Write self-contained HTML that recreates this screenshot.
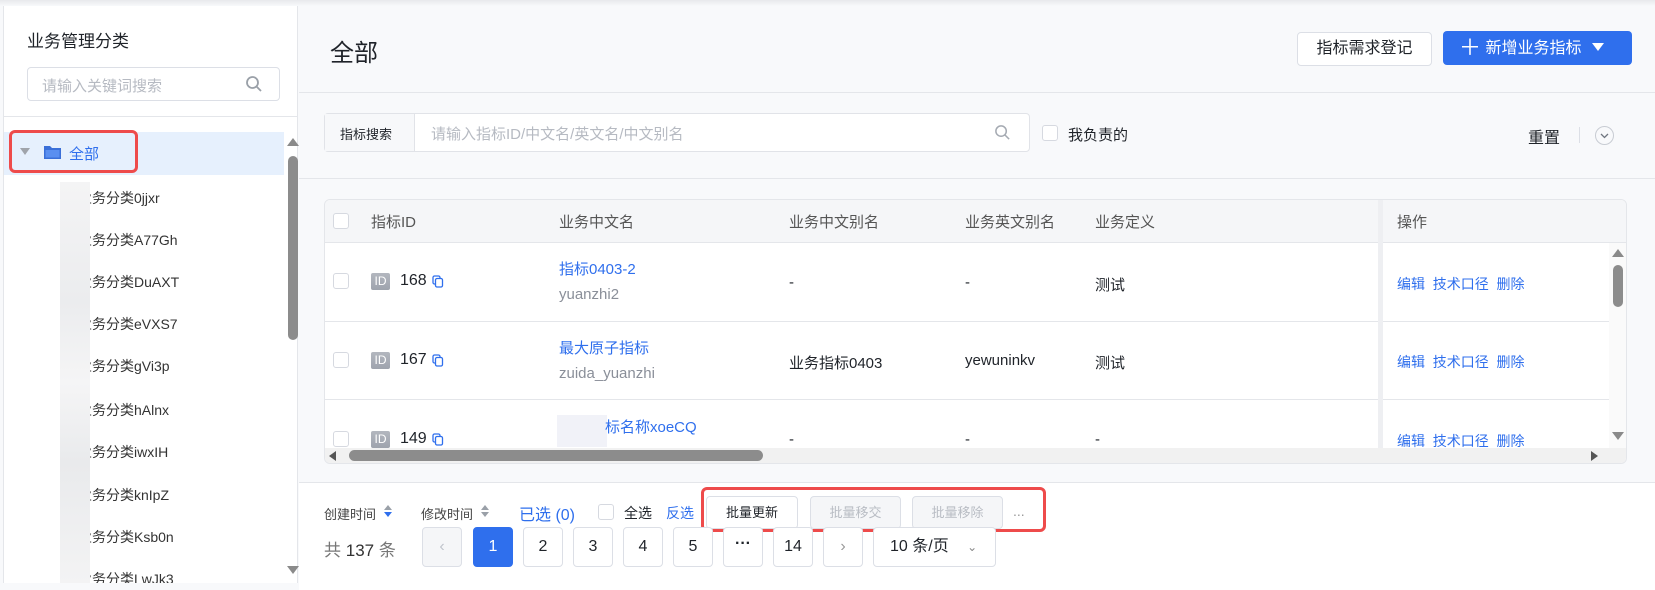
<!DOCTYPE html>
<html><head><meta charset="utf-8">
<style>
*{box-sizing:border-box;margin:0;padding:0}
body{width:1655px;height:590px;overflow:hidden;background:#f8f9fb;font-family:"Liberation Sans","Noto Sans CJK SC",sans-serif;font-size:14px;color:#1f2329;position:relative}
.a{position:absolute;white-space:nowrap}
.blue{color:#2f6fed}
.gray{color:#8a8f99}
.cb{position:absolute;width:16px;height:16px;border:1px solid #d6d9e0;border-radius:3px;background:#fff}
.pg{position:absolute;top:527px;width:40px;height:40px;border:1px solid #dcdfe6;border-radius:4px;background:#fff;text-align:center;line-height:38px;font-size:16px}
.btn{position:absolute;top:496px;height:33px;border:1px solid #dcdfe6;border-radius:4px;text-align:center;line-height:31px;font-size:14px}
.idb{position:absolute;width:19px;height:17px;border-radius:2px;background:linear-gradient(#b3b7bf,#9ea3ad);color:#fff;font-size:12px;line-height:17px;text-align:center}
.blur{position:absolute;left:60px;width:30px;height:22px;background:#eeeff1}
</style></head><body>
<div class="a" style="left:0;top:0;width:1655px;height:6px;background:linear-gradient(#e8e9ec,#f8f9fb)"></div>
<!-- left panel -->
<div class="a" style="left:3px;top:6px;width:295px;height:577px;background:#fff;border-left:1px solid #e4e6ea;border-right:1px solid #e4e6ea"></div>
<div class="a" style="left:27px;top:27px;font-size:17px">业务管理分类</div>
<div class="a" style="left:27px;top:67px;width:253px;height:34px;border:1px solid #dcdfe6;border-radius:4px"></div>
<div class="a" style="left:42px;top:75px;font-size:15px;color:#b6bac2">请输入关键词搜索</div>
<svg class="a" style="left:245px;top:75px" width="18" height="18" viewBox="0 0 18 18"><circle cx="7.5" cy="7.5" r="5.5" fill="none" stroke="#9aa0a8" stroke-width="1.8"/><path d="M11.5 11.5L16 16" stroke="#9aa0a8" stroke-width="1.8"/></svg>
<div class="a" style="left:4px;top:116px;width:293px;height:1px;background:#e4e6ea"></div>
<div class="a" style="left:4px;top:132px;width:280px;height:43px;background:#e6f0fd"></div>
<div class="a" style="left:9px;top:130px;width:129px;height:43px;border:3px solid #ee4b4b;border-radius:6px"></div>
<div class="a" style="left:20px;top:148px;width:0;height:0;border-left:5px solid transparent;border-right:5px solid transparent;border-top:7px solid #a0a4ab"></div>
<svg class="a" style="left:44px;top:145px" width="17" height="14" viewBox="0 0 17 14"><path d="M0 1h6l2 2h9v11H0z" fill="#3a6fd8"/><rect x="1.5" y="5" width="14" height="7.5" fill="#5a8ff0"/></svg>
<div class="a blue" style="left:69px;top:143px;font-size:15px">全部</div>
<div class="a" style="left:78px;top:188px;color:#333">业务分类0jjxr</div>
<div class="a" style="left:78px;top:230px;color:#333">业务分类A77Gh</div>
<div class="a" style="left:78px;top:272px;color:#333">业务分类DuAXT</div>
<div class="a" style="left:78px;top:314px;color:#333">业务分类eVXS7</div>
<div class="a" style="left:78px;top:356px;color:#333">业务分类gVi3p</div>
<div class="a" style="left:78px;top:400px;color:#333">业务分类hAlnx</div>
<div class="a" style="left:78px;top:442px;color:#333">业务分类iwxIH</div>
<div class="a" style="left:78px;top:485px;color:#333">业务分类knIpZ</div>
<div class="a" style="left:78px;top:527px;color:#333">业务分类Ksb0n</div>
<div class="a" style="left:78px;top:569px;color:#333;height:14px;overflow:hidden">业务分类LwJk3</div>
<div class="a" style="left:60px;top:182px;width:30px;height:401px;background:linear-gradient(#f4f4f5,#ebecee 30%,#f5f5f6 50%,#e9eaec 70%,#f3f3f4)"></div>
<div class="a" style="left:287px;top:138px;width:0;height:0;border-left:6px solid transparent;border-right:6px solid transparent;border-bottom:8px solid #8a8a8a"></div>
<div class="a" style="left:288px;top:156px;width:10px;height:184px;border-radius:5px;background:#8c8c8c"></div>
<div class="a" style="left:287px;top:566px;width:0;height:0;border-left:6px solid transparent;border-right:6px solid transparent;border-top:8px solid #8a8a8a"></div>
<!-- header -->
<div class="a" style="left:330px;top:33px;font-size:24px">全部</div>
<div class="a" style="left:1297px;top:32px;width:135px;height:34px;background:#fff;border:1px solid #dcdfe6;border-radius:4px;text-align:center;line-height:32px;font-size:16px">指标需求登记</div>
<div class="a" style="left:1443px;top:31px;width:189px;height:34px;background:#2f6fed;border-radius:4px;color:#fff;font-size:16px;line-height:34px;padding-left:16px">
<span style="font-size:22px;vertical-align:-2px">＋</span> 新增业务指标 <span style="display:inline-block;margin-left:6px;width:0;height:0;border-left:6px solid transparent;border-right:6px solid transparent;border-top:8px solid #fff;vertical-align:2px"></span></div>
<div class="a" style="left:299px;top:92px;width:1356px;height:1px;background:#e4e6ea"></div>
<!-- search -->
<div class="a" style="left:324px;top:113px;width:706px;height:39px;border:1px solid #e1e3e8;border-radius:4px;background:#fff"></div>
<div class="a" style="left:325px;top:114px;width:90px;height:37px;background:#f7f8fa;border-right:1px solid #e1e3e8"></div>
<div class="a" style="left:340px;top:124px;font-size:13px">指标搜索</div>
<div class="a" style="left:431px;top:123px;font-size:15px;color:#b6bac2">请输入指标ID/中文名/英文名/中文别名</div>
<svg class="a" style="left:994px;top:124px" width="17" height="17" viewBox="0 0 18 18"><circle cx="7.5" cy="7.5" r="5.5" fill="none" stroke="#a5aab2" stroke-width="1.6"/><path d="M11.5 11.5L16 16" stroke="#a5aab2" stroke-width="1.6"/></svg>
<div class="cb" style="left:1042px;top:125px"></div>
<div class="a" style="left:1068px;top:124px;font-size:15px">我负责的</div>
<div class="a" style="left:1528px;top:124px;font-size:16px">重置</div>
<div class="a" style="left:1579px;top:127px;width:1px;height:16px;background:#dcdfe6"></div>
<div class="a" style="left:1595px;top:126px;width:19px;height:19px;border:1px solid #c8ccd3;border-radius:50%"></div>
<svg class="a" style="left:1600px;top:133px" width="9" height="6" viewBox="0 0 9 6"><path d="M1 1l3.5 3.5L8 1" fill="none" stroke="#707680" stroke-width="1.3"/></svg>
<div class="a" style="left:299px;top:178px;width:1356px;height:1px;background:#e4e6ea"></div>
<!-- table -->
<div class="a" style="left:324px;top:199px;width:1303px;height:265px;background:#fff;border:1px solid #e4e6ea;border-radius:6px;overflow:hidden">
<div class="a" style="left:0;top:0;width:1303px;height:43px;background:#f5f6f8;border-bottom:1px solid #e4e6ea"></div>
<div class="a" style="left:0;top:121px;width:1285px;height:1px;background:#e4e6ea"></div>
<div class="a" style="left:0;top:199px;width:1285px;height:1px;background:#e4e6ea"></div>
<div class="a" style="left:1053px;top:0;width:5px;height:248px;background:#eeeff2"></div>
<div class="a" style="left:1284px;top:43px;width:19px;height:205px;background:#fafafa"></div>
<div class="a" style="left:1287px;top:49px;width:0;height:0;border-left:6px solid transparent;border-right:6px solid transparent;border-bottom:8px solid #8a8a8a"></div>
<div class="a" style="left:1288px;top:65px;width:10px;height:42px;border-radius:5px;background:#8c8c8c"></div>
<div class="a" style="left:1287px;top:232px;width:0;height:0;border-left:6px solid transparent;border-right:6px solid transparent;border-top:8px solid #8a8a8a"></div>
<div class="a" style="left:0;top:248px;width:1303px;height:17px;background:#f1f1f1"></div>
<div class="a" style="left:4px;top:251px;width:0;height:0;border-top:5px solid transparent;border-bottom:5px solid transparent;border-right:7px solid #555"></div>
<div class="a" style="left:24px;top:250px;width:414px;height:11px;border-radius:6px;background:#8c8c8c"></div>
<div class="a" style="left:1266px;top:251px;width:0;height:0;border-top:5px solid transparent;border-bottom:5px solid transparent;border-left:7px solid #555"></div>
</div>
<div class="cb" style="left:333px;top:213px"></div>
<div class="a" style="left:371px;top:211px;font-size:15px;color:#555">指标ID</div>
<div class="a" style="left:559px;top:211px;font-size:15px;color:#555">业务中文名</div>
<div class="a" style="left:789px;top:211px;font-size:15px;color:#555">业务中文别名</div>
<div class="a" style="left:965px;top:211px;font-size:15px;color:#555">业务英文别名</div>
<div class="a" style="left:1095px;top:211px;font-size:15px;color:#555">业务定义</div>
<div class="a" style="left:1397px;top:211px;font-size:15px;color:#555">操作</div>
<!-- row1 -->
<div class="cb" style="left:333px;top:273px"></div>
<div class="idb" style="left:371px;top:273px">ID</div><div class="a" style="left:400px;top:272px;font-size:16px">168</div>
<svg class="a" style="left:432px;top:275px" width="12" height="13" viewBox="0 0 12 13"><rect x="1" y="1" width="7" height="8" rx="1.5" fill="none" stroke="#2f6fed" stroke-width="1.3"/><rect x="3.5" y="3.5" width="7" height="8.5" rx="1.5" fill="#fff" stroke="#2f6fed" stroke-width="1.3"/></svg>
<div class="a blue" style="left:559px;top:258px;font-size:15px">指标0403-2</div>
<div class="a gray" style="left:559px;top:286px;font-size:15px">yuanzhi2</div>
<div class="a" style="left:789px;top:274px;font-size:15px">-</div>
<div class="a" style="left:965px;top:274px;font-size:15px">-</div>
<div class="a" style="left:1095px;top:274px;font-size:15px">测试</div>
<div class="a blue" style="left:1397px;top:274px">编辑 &nbsp;技术口径 &nbsp;删除</div>
<!-- row2 -->
<div class="cb" style="left:333px;top:352px"></div>
<div class="idb" style="left:371px;top:352px">ID</div><div class="a" style="left:400px;top:351px;font-size:16px">167</div>
<svg class="a" style="left:432px;top:354px" width="12" height="13" viewBox="0 0 12 13"><rect x="1" y="1" width="7" height="8" rx="1.5" fill="none" stroke="#2f6fed" stroke-width="1.3"/><rect x="3.5" y="3.5" width="7" height="8.5" rx="1.5" fill="#fff" stroke="#2f6fed" stroke-width="1.3"/></svg>
<div class="a blue" style="left:559px;top:337px;font-size:15px">最大原子指标</div>
<div class="a gray" style="left:559px;top:365px;font-size:15px">zuida_yuanzhi</div>
<div class="a" style="left:789px;top:352px;font-size:15px">业务指标0403</div>
<div class="a" style="left:965px;top:352px;font-size:15px">yewuninkv</div>
<div class="a" style="left:1095px;top:352px;font-size:15px">测试</div>
<div class="a blue" style="left:1397px;top:352px">编辑 &nbsp;技术口径 &nbsp;删除</div>
<!-- row3 -->
<div class="cb" style="left:333px;top:431px;height:16px;"></div>
<div class="idb" style="left:371px;top:431px">ID</div><div class="a" style="left:400px;top:430px;font-size:16px">149</div>
<svg class="a" style="left:432px;top:433px" width="12" height="13" viewBox="0 0 12 13"><rect x="1" y="1" width="7" height="8" rx="1.5" fill="none" stroke="#2f6fed" stroke-width="1.3"/><rect x="3.5" y="3.5" width="7" height="8.5" rx="1.5" fill="#fff" stroke="#2f6fed" stroke-width="1.3"/></svg>
<div class="a" style="left:557px;top:415px;width:50px;height:32px;background:#f1f2f8"></div>
<div class="a blue" style="left:605px;top:416px;font-size:15px">标名称xoeCQ</div>
<div class="a" style="left:789px;top:431px;font-size:15px">-</div>
<div class="a" style="left:965px;top:431px;font-size:15px">-</div>
<div class="a" style="left:1095px;top:431px;font-size:15px">-</div>
<div class="a blue" style="left:1397px;top:431px">编辑 &nbsp;技术口径 &nbsp;删除</div>
<!-- footer -->
<div class="a" style="left:299px;top:482px;width:1356px;height:108px;background:#fff;border-top:1px solid #e4e6ea"></div>
<div class="a" style="left:324px;top:504px;font-size:13px;color:#444">创建时间</div>
<div class="a" style="left:384px;top:505px;width:0;height:0;border-left:4px solid transparent;border-right:4px solid transparent;border-bottom:5px solid #9aa0a8"></div>
<div class="a" style="left:384px;top:512px;width:0;height:0;border-left:4px solid transparent;border-right:4px solid transparent;border-top:5px solid #2f6fed"></div>
<div class="a" style="left:421px;top:504px;font-size:13px;color:#444">修改时间</div>
<div class="a" style="left:481px;top:505px;width:0;height:0;border-left:4px solid transparent;border-right:4px solid transparent;border-bottom:5px solid #9aa0a8"></div>
<div class="a" style="left:481px;top:512px;width:0;height:0;border-left:4px solid transparent;border-right:4px solid transparent;border-top:5px solid #9aa0a8"></div>
<div class="a blue" style="left:519px;top:501px;font-size:16px">已选 (0)</div>
<div class="cb" style="left:598px;top:504px"></div>
<div class="a" style="left:624px;top:503px;font-size:14px">全选</div>
<div class="a blue" style="left:666px;top:503px;font-size:14px">反选</div>
<div class="btn" style="left:706px;width:92px;background:#fff;font-size:13px">批量更新</div>
<div class="btn" style="left:810px;width:91px;background:#f5f6f8;color:#b9bdc4;font-size:13px">批量移交</div>
<div class="btn" style="left:912px;width:91px;background:#f5f6f8;color:#b9bdc4;font-size:13px">批量移除</div>
<div class="a" style="left:1013px;top:503px;color:#999">...</div>
<div class="a" style="left:701px;top:487px;width:345px;height:45px;border:3px solid #ee4b4b;border-radius:6px"></div>
<div class="a" style="left:324px;top:536px;font-size:17px;color:#777">共 <span style="color:#333">137</span> 条</div>
<div class="pg" style="left:422px;background:#f5f6f8;color:#c0c4cc">‹</div>
<div class="pg" style="left:473px;background:#2f6fed;border-color:#2f6fed;color:#fff">1</div>
<div class="pg" style="left:523px">2</div>
<div class="pg" style="left:573px">3</div>
<div class="pg" style="left:623px">4</div>
<div class="pg" style="left:673px">5</div>
<div class="pg" style="left:723px;font-weight:bold;line-height:32px">···</div>
<div class="pg" style="left:773px">14</div>
<div class="pg" style="left:823px;color:#999">›</div>
<div class="pg" style="left:873px;width:123px;text-align:left;padding-left:16px">10 条/页 <span style="margin-left:14px;color:#888;font-size:12px">⌄</span></div>
</body></html>
